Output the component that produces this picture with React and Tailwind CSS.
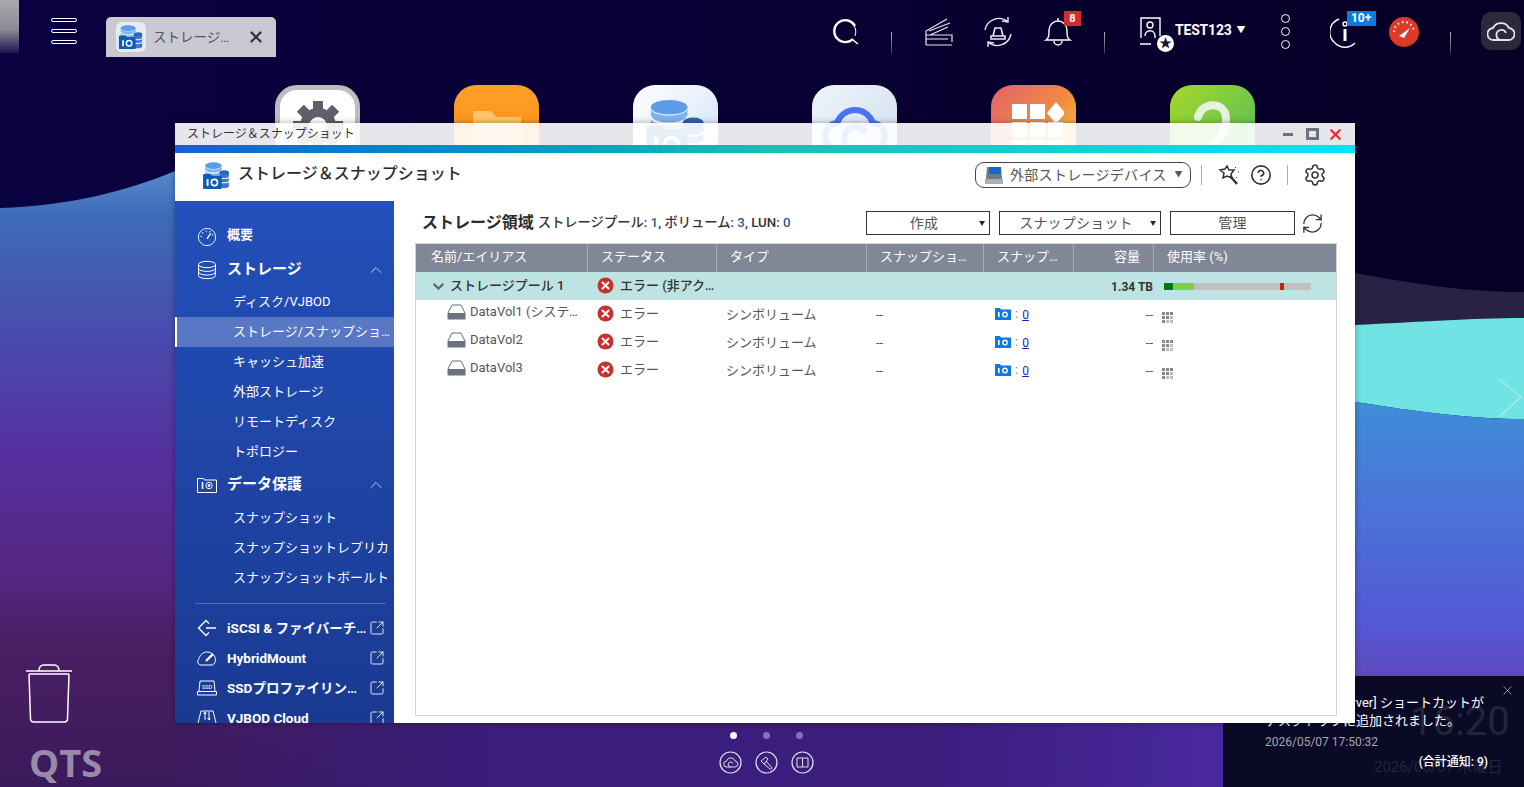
import React from 'react';
import { SquareArrowOutUpRight, ChevronUp, ChevronDown, X, RefreshCw, Settings, CircleHelp } from 'lucide-react';

// Storage app icon, used in the tab and in the window header
function StorageIcon({ size = 28 }) {
  return (
    <svg width={size} height={size} viewBox="0 0 28 28">
      <ellipse cx="11" cy="4.5" rx="8" ry="3.2" fill="#5b9be8" />
      <path d="M3 5v9h16V5a8 3.2 0 0 1-16 0z" fill="#7fb4f0" />
      <path d="M3 8.5a8 3.2 0 0 0 16 0M3 12a8 3.2 0 0 0 16 0" fill="none" stroke="#fff" strokeWidth="1" />
      <path d="M17 11h9v13a4 2 0 0 1-9 0z" fill="#3e78cc" />
      <ellipse cx="21.5" cy="11" rx="4.5" ry="2" fill="#2f63b4" />
      <path d="M17 15a4.5 2 0 0 0 9 0M17 19a4.5 2 0 0 0 9 0" fill="none" stroke="#fff" strokeWidth="1" />
      <rect x="1" y="14" width="18" height="13" rx="1" fill="#0f5db0" />
      <rect x="1" y="12.5" width="8" height="3" rx="1" fill="#0f5db0" />
      <rect x="4.5" y="17.5" width="1.8" height="6.5" fill="#fff" />
      <circle cx="12" cy="20.7" r="3" fill="none" stroke="#fff" strokeWidth="1.6" />
    </svg>
  );
}

function Wallpaper() {
  return (
    <svg className="absolute inset-0" width="1524" height="787" viewBox="0 0 1524 787">
      <defs>
        <linearGradient id="top" x1="0" y1="0" x2="1" y2="0">
          <stop offset="0" stopColor="#0a0140" />
          <stop offset="1" stopColor="#060026" />
        </linearGradient>
        <linearGradient id="wave" x1="0" y1="150" x2="0" y2="787" gradientUnits="userSpaceOnUse">
          <stop offset="0" stopColor="#6496d2" />
          <stop offset="0.1" stopColor="#3f6cb8" />
          <stop offset="0.3" stopColor="#4a4aac" />
          <stop offset="0.48" stopColor="#55309e" />
          <stop offset="0.66" stopColor="#562784" />
          <stop offset="0.78" stopColor="#4b1e62" />
          <stop offset="1" stopColor="#3a1a5c" />
        </linearGradient>
        <linearGradient id="mid" x1="0" y1="0" x2="1" y2="0">
          <stop offset="0" stopColor="#3a1d7c" stopOpacity="0" />
          <stop offset="0.3" stopColor="#3a1d7c" />
          <stop offset="0.7" stopColor="#3a1d7c" />
          <stop offset="1" stopColor="#4a2aa0" />
        </linearGradient>
        <linearGradient id="rightBlue" x1="0" y1="402" x2="0" y2="680" gradientUnits="userSpaceOnUse">
          <stop offset="0" stopColor="#3f8ed8" />
          <stop offset="0.45" stopColor="#4c6fd8" />
          <stop offset="0.8" stopColor="#5558d6" />
          <stop offset="1" stopColor="#6248bc" />
        </linearGradient>
        <linearGradient id="corner" x1="0" y1="0" x2="0" y2="1">
          <stop offset="0" stopColor="#a9a6ad" />
          <stop offset="0.55" stopColor="#8f8c98" />
          <stop offset="1" stopColor="#1c1550" />
        </linearGradient>
      </defs>
      <rect width="1524" height="787" fill="url(#top)" />
      <path d="M0 208C70 206 130 190 175 171C260 140 400 180 600 300L900 787H0z" fill="url(#wave)" />
      <rect x="175" y="700" width="1060" height="87" fill="url(#mid)" />
      <path d="M1355 273C1420 285 1470 292 1524 292V330H1355z" fill="#2a2245" />
      <path d="M1355 325C1420 322 1470 318 1524 318V419C1470 419 1420 412 1355 402z" fill="#70e3e4" />
      <path d="M1355 402C1420 412 1470 419 1524 419V690H1355z" fill="url(#rightBlue)" />
      <path d="M1499 379L1521 397L1499 417" fill="none" stroke="#a8efee" strokeWidth="1.2" />
      <rect x="0" y="0" width="19" height="53" fill="url(#corner)" />
    </svg>
  );
}

function DesktopIcon({ className, children }) {
  return <div className={`w-[85px] h-[85px] rounded-[22px] overflow-hidden flex justify-center pt-[12px] shrink-0 ${className}`}>{children}</div>;
}

function DesktopIcons() {
  return (
    <div className="absolute left-[275px] top-[85px] flex gap-[94px]">
      <DesktopIcon className="bg-white border-[5px] border-[#bdbdbd] !pt-[6px]">
        <svg width="60" height="60" viewBox="0 0 60 60">
          {[0, 45, 90, 135, 180, 225, 270, 315].map((a) => (
            <rect key={a} x="25" y="5" width="10" height="12" fill="#5f6068" transform={`rotate(${a} 30 30)`} />
          ))}
          <circle cx="30" cy="30" r="18" fill="#5f6068" />
          <circle cx="30" cy="30" r="9" fill="#fff" />
        </svg>
      </DesktopIcon>
      <DesktopIcon className="bg-gradient-to-b from-[#ffa028] to-[#f58a10]">
        <svg width="60" height="60" viewBox="0 0 60 60"><path d="M6 14h18l5 6h25v34H6z" fill="#ffc46a" /></svg>
      </DesktopIcon>
      <DesktopIcon className="bg-gradient-to-br from-white to-[#cfe0f6]">
        <StorageIcon size={64} />
      </DesktopIcon>
      <DesktopIcon className="bg-gradient-to-br from-[#eef5fa] to-[#cfdcec]">
        <svg width="68" height="68" viewBox="0 0 68 68" fill="none" stroke="#4a74f0" strokeWidth="6">
          <path d="M18 52a13 13 0 0 1-2-26 19 19 0 0 1 36 0 13 13 0 0 1-2 26z" />
          <path d="M34 52a11 11 0 1 1 10-16" />
        </svg>
      </DesktopIcon>
      <DesktopIcon className="bg-gradient-to-br from-[#e2606a] via-[#f08a40] to-[#f2d814] !pt-[17px]">
        <svg width="60" height="60" viewBox="0 0 60 60" fill="#fff">
          <rect x="8" y="2" width="15" height="15" /><rect x="26" y="2" width="15" height="15" />
          <path d="M52 0l9 11-9 11-9-11z" />
          <rect x="8" y="20" width="15" height="15" /><rect x="26" y="20" width="15" height="15" /><rect x="44" y="20" width="15" height="15" />
          <rect x="8" y="38" width="15" height="15" /><rect x="26" y="38" width="15" height="15" /><rect x="44" y="38" width="15" height="15" />
        </svg>
      </DesktopIcon>
      <DesktopIcon className="bg-gradient-to-br from-[#a6d820] to-[#46b858]">
        <svg width="50" height="70" viewBox="0 0 50 70" fill="none" stroke="#e6f2dc" strokeWidth="8" strokeLinecap="round">
          <path d="M10 20C14 4 38 4 38 22C38 36 28 42 22 58" />
        </svg>
      </DesktopIcon>
    </div>
  );
}

function TopBar() {
  return (
    <header className="absolute left-0 top-0 w-full h-[60px] flex items-center text-white">
      <div className="ml-[51px] w-[26px] flex flex-col gap-[7px] mt-[2px]">
        <span className="h-[4px] rounded-full border border-white" />
        <span className="h-[4px] rounded-full border border-white" />
        <span className="h-[4px] rounded-full border border-white" />
      </div>
      <div className="ml-[29px] mt-[14px] w-[170px] h-[40px] rounded-t-[5px] bg-[#c9c8d3] flex items-center pl-[10px]">
        <div className="w-[30px] h-[30px] rounded-[6px] bg-[#e6eaf3] flex items-center justify-center"><StorageIcon size={26} /></div>
        <span className="ml-[7px] text-[13.5px] text-[#555] w-[78px] truncate">ストレージ＆スナップショット</span>
        <X size={18} strokeWidth={3} className="ml-[16px] text-[#333]" />
      </div>

      <svg className="ml-[555px] mt-[4px]" width="30" height="30" viewBox="0 0 30 30" fill="none" stroke="#fff" strokeWidth="2">
        <path d="M24 9A11 11 0 1 0 22 22" strokeWidth="2.4" />
        <path d="M19 5A11 11 0 0 1 24 19" strokeWidth="1" />
        <path d="M22 23l5 4" strokeWidth="1.6" />
      </svg>
      <span className="ml-[30px] mt-[26px] w-px h-[22px] bg-gradient-to-b from-white/70 to-white/20" />
      <svg className="ml-[31px] mt-[4px]" width="30" height="30" viewBox="0 0 30 30" fill="none" stroke="#e8e8f0" strokeWidth="1.2">
        <path d="M3 28h26M3 28V14L24 2M3 18h26v7M6 14L27 6M3 22h22M7 18l18-8" />
      </svg>
      <svg className="ml-[29px] mt-[4px]" width="32" height="32" viewBox="0 0 32 32" fill="none" stroke="#e8e8f0" strokeWidth="1.4">
        <path d="M26 6A14 14 0 0 0 3 14M6 26A14 14 0 0 0 29 18" />
        <path d="M20 5l6 1 0-5M12 27l-6-1 0 5" />
        <path d="M11 20l2-8h6l2 8zM9 20h14v3H9z" strokeWidth="1.6" />
      </svg>
      <div className="relative ml-[29px] mt-[4px] w-[32px] h-[32px]">
        <svg width="30" height="32" viewBox="0 0 30 32" fill="none" stroke="#fff" strokeWidth="1.4">
          <path d="M3 24c3-2 3-5 3-10a9 9 0 0 1 18 0c0 5 0 8 3 10zM11 25a4 4 0 0 0 8 0M15 2v3" />
        </svg>
        <span className="absolute left-[21px] top-[-5px] w-[17px] h-[15px] bg-[#d92b2b] text-[11px] font-bold leading-[15px] text-center">8</span>
      </div>
      <span className="ml-[29px] mt-[26px] w-px h-[22px] bg-gradient-to-b from-white/70 to-white/20" />
      <div className="relative ml-[34px] mt-[4px] w-[30px] h-[32px]">
        <svg width="30" height="32" viewBox="0 0 30 32" fill="none" stroke="#fff" strokeWidth="1.4">
          <path d="M2 22V2h19v18M1 28h11" />
          <circle cx="11" cy="9" r="3" />
          <path d="M6 20c0-7 10-7 10 0v2" />
        </svg>
        <div className="absolute left-[18px] top-[19px] w-[17px] h-[17px] rounded-full bg-white text-[#15103a] text-[13px] leading-[16px] text-center">★</div>
      </div>
      <span className="ml-[6px] mt-[1px] text-[14px] font-bold tracking-[-0.2px]">TEST123</span>
      <span className="ml-[5px] mt-[2px] text-[9px]">▼</span>
      <div className="ml-[35px] mt-[2px] flex flex-col gap-[4px]">
        <span className="w-[9px] h-[9px] rounded-full border border-white" />
        <span className="w-[9px] h-[9px] rounded-full border border-white" />
        <span className="w-[9px] h-[9px] rounded-full border border-white" />
      </div>
      <div className="relative ml-[40px] mt-[4px] w-[30px] h-[32px]">
        <svg width="30" height="32" viewBox="0 0 30 32" fill="none" stroke="#fff" strokeWidth="1.4">
          <path d="M9 3A14 14 0 0 0 5 27M25 27a14 14 0 0 1-20 0" />
          <circle cx="15" cy="8" r="2" />
          <path d="M15 13v12" strokeWidth="3" />
        </svg>
        <span className="absolute left-[17px] top-[-5px] w-[29px] h-[15px] bg-[#0a7ae6] text-[12px] font-bold leading-[15px] text-center">10+</span>
      </div>
      <svg className="ml-[28px] mt-[4px]" width="32" height="32" viewBox="0 0 32 32" fill="none">
        <circle cx="16" cy="16" r="15" fill="#dd3a2a" />
        <path d="M6 16a10 10 0 0 1 20 0" stroke="#fff" strokeWidth="2" strokeDasharray="1.5 3" />
        <path d="M11 20l11-8-6 10z" fill="#fff" />
      </svg>
      <span className="ml-[30px] mt-[26px] w-px h-[22px] bg-gradient-to-b from-white/70 to-white/20" />
      <div className="ml-[30px] mt-[2px] w-[40px] h-[38px] rounded-[10px] bg-[#2a2a3c] flex items-center justify-center">
        <svg width="28" height="22" viewBox="0 0 28 22" fill="none" stroke="#e4e4ea" strokeWidth="1.8">
          <path d="M7 20a6 6 0 0 1-1-12 9 9 0 0 1 16 0 6 6 0 0 1-1 12z" />
          <path d="M14 20a5 5 0 1 1 5-7" />
        </svg>
      </div>
    </header>
  );
}

const sideIcons = {
  gauge: (
    <svg width="22" height="22" viewBox="0 0 22 22" fill="none" stroke="#fff" strokeWidth="1">
      <circle cx="11" cy="11" r="9.5" />
      <path d="M4.5 11a6.5 6.5 0 0 1 13 0" strokeDasharray="1.2 3" strokeWidth="1.4" />
      <path d="M11 13l4-6" strokeWidth="1.4" />
    </svg>
  ),
  db: (
    <svg width="20" height="20" viewBox="0 0 20 20" fill="none" stroke="#fff" strokeWidth="1">
      <ellipse cx="10" cy="4.5" rx="8.5" ry="3.2" />
      <path d="M1.5 4.5v11c0 4.2 17 4.2 17 0v-11M1.5 8.2c0 4.2 17 4.2 17 0M1.5 11.900c0 4.2 17 4.2 17 0" />
    </svg>
  ),
  snap: (
    <svg width="20" height="16" viewBox="0 0 20 16" fill="none" stroke="#fff" strokeWidth="1">
      <path d="M.5 15.500V1.500h6l1 1.500h12v12.500z" />
      <path d="M5.500 5v7" strokeWidth="1.6" />
      <circle cx="12" cy="8.500" r="3.200" />
      <circle cx="12" cy="8.500" r="1" fill="#fff" />
    </svg>
  ),
  iscsi: (
    <svg width="20" height="18" viewBox="0 0 20 18" fill="none" stroke="#fff" strokeWidth="1.3">
      <path d="M12 4.500L9 1.500L1.500 9l7.500 7.500L12 13.500M9 9h10" />
    </svg>
  ),
  cloud: (
    <svg width="20" height="15" viewBox="0 0 20 15" fill="none" stroke="#fff" strokeWidth="1">
      <path d="M4 14a3.300 3.300 0 0 1-2.500-5.500C3 4 6 1 10 1c3 0 5 1 6.500 3 2.500 2 3 8-1 10z" />
      <path d="M9 10l7-7" strokeWidth="2.4" />
    </svg>
  ),
  ssd: (
    <svg width="20" height="16" viewBox="0 0 20 16" fill="none" stroke="#fff" strokeWidth="1">
      <path d="M2 11L3 1h14l1 10M.5 11.500h19v3.500H.5z" />
      <text x="10" y="9" fontSize="5.500" textAnchor="middle" fill="#fff" stroke="none" fontFamily="Roboto">SSD</text>
    </svg>
  ),
  vjbod: (
    <svg width="20" height="18" viewBox="0 0 20 18" fill="none" stroke="#fff" strokeWidth="1">
      <path d="M1 14L4 2h12l3 12M.5 14.500h19v3H.5zM8 11V3M6.500 5L8 3l1.500 2M12 3v8M10.500 9l1.500 2 1.500-2" />
    </svg>
  ),
};

const storageItems = ['ディスク/VJBOD', 'ストレージ/スナップショット', 'キャッシュ加速', '外部ストレージ', 'リモートディスク', 'トポロジー'];
const protectItems = ['スナップショット', 'スナップショットレプリカ', 'スナップショットボールト'];
const externalItems = [
  { icon: 'iscsi', label: 'iSCSI & ファイバーチャネル' },
  { icon: 'cloud', label: 'HybridMount' },
  { icon: 'ssd', label: 'SSDプロファイリングツール' },
  { icon: 'vjbod', label: 'VJBOD Cloud' },
];

function SideHeading({ icon, label, large, open }) {
  return (
    <div className="h-[33px] flex items-center pl-[22px] pr-[8px] text-white">
      <span className="w-[20px] flex justify-center">{sideIcons[icon]}</span>
      <span className={`ml-[10px] font-bold ${large ? 'text-[15px]' : 'text-[13px] mt-[-3px]'}`}>{label}</span>
      {open && <ChevronUp size={20} strokeWidth={1} className="ml-auto text-[#dde4f6]" />}
    </div>
  );
}

function SideItem({ label, selected }) {
  return (
    <div className={`h-[30px] flex items-center pl-[58px] text-[13px] text-white ${selected ? 'bg-white/25 border-l-2 border-white !pl-[56px] pr-[3px]' : ''}`}>
      <span className="truncate">{label}</span>
    </div>
  );
}

function Sidebar() {
  return (
    <aside className="w-[219px] shrink-0 bg-gradient-to-b from-[#2350ba] to-[#1a3a92] pt-[19px] overflow-hidden">
      <SideHeading icon="gauge" label="概要" />
      <SideHeading icon="db" label="ストレージ" large open />
      <div className="mt-[1px] mb-[1px]">
        {storageItems.map((item, i) => (
          <SideItem key={item} label={item} selected={i === 1} />
        ))}
      </div>
      <SideHeading icon="snap" label="データ保護" large open />
      <div className="mt-[2px]">
        {protectItems.map((item) => (
          <SideItem key={item} label={item} />
        ))}
      </div>
      <div className="ml-[20px] mr-[8px] mt-[10px] mb-[9px] h-px bg-white/25" />
      {externalItems.map((item) => (
        <div key={item.label} className="h-[30px] flex items-center pl-[22px] pr-[9px] text-white">
          <span className="w-[20px] flex justify-center shrink-0">{sideIcons[item.icon]}</span>
          <span className="ml-[10px] text-[13.5px] font-bold truncate flex-1">{item.label}</span>
          <SquareArrowOutUpRight size={16} strokeWidth={1.3} className="ml-[2px] shrink-0" />
        </div>
      ))}
    </aside>
  );
}

const gridCols = 'grid grid-cols-[171px_129px_150px_117px_90px_80px_1fr]';
const columns = [
  { label: '名前/エイリアス' },
  { label: 'ステータス' },
  { label: 'タイプ' },
  { label: 'スナップショット数' },
  { label: 'スナップショット' },
  { label: '容量', right: true },
  { label: '使用率 (%)' },
];
const volumes = [
  { name: 'DataVol1 (システムボリューム)' },
  { name: 'DataVol2' },
  { name: 'DataVol3' },
];

function ErrorIcon() {
  return (
    <svg width="17" height="17" viewBox="0 0 17 17" className="shrink-0 mt-[-2px]">
      <circle cx="8.500" cy="8.500" r="8" fill="#c9302c" />
      <path d="M5.500 5.500l6 6M11.500 5.500l-6 6" stroke="#fff" strokeWidth="2" strokeLinecap="round" />
    </svg>
  );
}

function DriveIcon() {
  return (
    <svg width="19" height="16" viewBox="0 0 19 16" className="shrink-0">
      <path d="M1 9L5 1h9l4 8" fill="none" stroke="#666c7c" strokeWidth="1" />
      <path d="M.5 9h18v6.500H.5z" fill="#6b7182" />
    </svg>
  );
}

function SnapBadge() {
  return (
    <svg width="16" height="13" viewBox="0 0 16 13" className="mt-[-2px]">
      <path d="M0 13V1h5l1 1.500h10V13z" fill="#0a7ae6" />
      <rect x="3" y="5" width="1.600" height="5" fill="#fff" />
      <circle cx="10" cy="7.500" r="2.200" fill="none" stroke="#fff" strokeWidth="1.400" />
    </svg>
  );
}

function PixelIcon() {
  return (
    <svg width="12" height="12" viewBox="0 0 12 12" fill="#888">
      {[0, 4, 8].map((x) => [0, 4, 8].map((y) => <rect key={`${x}-${y}`} x={x} y={y} width="3" height="3" opacity={x + y > 8 ? 0.55 : 1} />))}
    </svg>
  );
}

function Dropdown({ label, width, caret }) {
  return (
    <div className={`h-[24px] border border-[#333] flex items-center relative text-[14px] text-[#555] justify-center ${caret ? 'pr-[8px]' : ''} ${width}`}>
      <span className="tracking-[0.2px]">{label}</span>
      {caret && <span className="absolute right-[4px] top-[6px] text-[6px] text-[#222]">▼</span>}
    </div>
  );
}

function Content() {
  return (
    <main className="flex-1 min-w-0 pr-[18px] pt-[5px] pb-[7px] pl-[21px] flex flex-col bg-white">
      <div className="h-[34px] shrink-0 flex items-center">
        <h2 className="ml-[7px] text-[16px] font-bold text-[#2b2b2b]">ストレージ領域</h2>
        <p className="ml-[4px] text-[13.3px] font-medium text-[#333]">
          ストレージプール: <span className="text-[#2a5a96]">1</span>, ボリューム: <span className="text-[#2a5a96]">3</span>, LUN: <span className="text-[#2a5a96]">0</span>
        </p>
        <div className="ml-auto flex items-center gap-[9px]">
          <Dropdown label="作成" width="w-[124px]" caret />
          <Dropdown label="スナップショット" width="w-[162px]" caret />
          <Dropdown label="管理" width="w-[125px]" />
          <RefreshCw size={23} strokeWidth={1.4} className="-ml-[3px] mr-[13px] text-[#333]" />
        </div>
      </div>
      <div className="flex-1 border border-[#d4d4d4] mt-[3px] w-[922px]">
        <div className={`${gridCols} h-[28px] bg-[#808898] text-[13px] text-white`}>
          {columns.map((col, i) => (
            <div key={col.label} className={`flex items-center min-w-0 ${i ? 'border-l border-[#a5abb8] pl-[13px]' : 'pl-[15px]'} pr-[13px] pb-[3px] ${col.right ? 'justify-end' : ''}`}>
              <span className="truncate">{col.label}</span>
            </div>
          ))}
        </div>
        <div className={`${gridCols} h-[28px] bg-[#bee3e3] text-[13px] text-[#333] items-center`}>
          <div className="pl-[14px] flex items-center gap-[3px] font-medium">
            <ChevronDown size={17} strokeWidth={3} className="text-[#666]" />
            <span className="truncate">ストレージプール 1</span>
          </div>
          <div className="pl-[10px] flex items-center gap-[6px] min-w-0">
            <ErrorIcon />
            <span className="truncate font-medium">エラー (非アクティブ)</span>
          </div>
          <div />
          <div />
          <div />
          <div className="text-right font-bold text-[12px] mt-[1px] text-[#333]">1.34 TB</div>
          <div className="pl-[11px] pr-[25px]">
            <div className="flex h-[7px] bg-[#c0c0c0] relative mt-[1px]">
              <span className="w-[9px] bg-[#007a0e]" />
              <span className="w-[21px] bg-[#7fd040]" />
              <span className="absolute left-[116px] w-[4px] h-full bg-[#e81010]" />
            </div>
          </div>
        </div>
        {volumes.map((vol) => (
          <div key={vol.name} className={`${gridCols} h-[28px] text-[13px] text-[#555] items-center`}>
            <div className="pl-[31px] flex items-center gap-[4px] min-w-0 pr-[6px] mt-[-4px]">
              <DriveIcon />
              <span className="truncate">{vol.name}</span>
            </div>
            <div className="pl-[10px] flex items-center gap-[6px]">
              <ErrorIcon />
              <span>エラー</span>
            </div>
            <div className="pl-[10px] mt-[2px]">シンボリューム</div>
            <div className="pl-[10px] mt-[2px]">--</div>
            <div className="pl-[12px] flex items-center gap-[4px]">
              <SnapBadge />
              <span className="text-[#888]">:</span>
              <span className="text-[#1a1ac8] underline text-[12px] mt-[2px]">0</span>
            </div>
            <div className="text-right mt-[2px]">--</div>
            <div className="pl-[9px] mt-[7px]"><PixelIcon /></div>
          </div>
        ))}
      </div>
    </main>
  );
}

function AppWindow() {
  return (
    <section className="absolute left-[175px] top-[123px] w-[1180px] h-[600px] flex flex-col shadow-[0_0_6px_rgba(0,0,0,0.35)]">
      <div className="h-[22px] shrink-0 bg-white/90 flex items-center pl-[12px] text-[12px] text-[#333]">
        <span>ストレージ＆スナップショット</span>
        <div className="ml-auto flex items-center pr-[11px]">
          <span className="w-[10px] h-[3px] bg-[#6a7282]" />
          <span className="ml-[13px] w-[13px] h-[12px] border-[3px] border-[#6a7282]" />
          <X size={17} strokeWidth={3} className="ml-[8px] text-[#dd2f2f]" />
        </div>
      </div>
      <div className="h-[8px] shrink-0 bg-gradient-to-r from-[#1a5ed0] via-[#16c0b0] to-[#00e6f8]" />
      <div className="h-[48px] shrink-0 bg-white flex items-center pl-[27px] pb-[4px]">
        <StorageIcon size={29} />
        <h1 className="ml-[7px] mt-[-2px] text-[16px] font-medium text-[#2b2b2b]">ストレージ＆スナップショット</h1>
        <div className="ml-auto flex items-center">
          <div className="w-[216px] h-[26px] rounded-[9px] border border-[#444] flex items-center pl-[8px] text-[14px] text-[#555]">
            <svg width="20" height="19" viewBox="0 0 20 19">
              <path d="M2 13L3 1h14l1 12z" fill="#6e7a84" />
              <rect x="5" y="1" width="12" height="7" fill="#1b66c8" />
              <path d="M1 13h18v5H1z" fill="#a8aeb4" />
            </svg>
            <span className="ml-[6px] tracking-[0.3px]">外部ストレージデバイス</span>
            <span className="ml-[8px] text-[8px] text-[#555]">▼</span>
          </div>
          <span className="ml-[10px] w-px h-[20px] bg-[#aaa]" />
          <svg className="ml-[16px]" width="22" height="22" viewBox="0 0 22 22" fill="none" stroke="#333" strokeWidth="1.500">
            <path d="M9 2l2 4 5 0-3 4 1 4-5-2-4 2 1-5-4-3 5-1z" />
            <path d="M12 12l7 8" strokeWidth="2.400" />
            <path d="M17 3l1 1M20 8h1M18 13l1 1" strokeWidth="1" />
          </svg>
          <CircleHelp size={22} strokeWidth={1.800} className="ml-[10px] text-[#333]" />
          <span className="ml-[15px] w-px h-[20px] bg-[#aaa]" />
          <Settings size={24} strokeWidth={1.500} className="ml-[15px] mr-[28px] text-[#333]" />
        </div>
      </div>
      <div className="flex-1 min-h-0 flex">
        <Sidebar />
        <Content />
      </div>
    </section>
  );
}

function Notification() {
  return (
    <div className="absolute right-0 bottom-0 w-[301px] h-[111px] bg-[#0a0a26] text-white">
      <div className="absolute left-[187px] top-[26px] text-[40px] leading-[40px] text-[#24243a]">16:20</div>
      <div className="absolute left-[151px] top-[80px] text-[15px] text-[#24243a]">2026/05/07 木曜日</div>
      <X size={15} strokeWidth={1} className="absolute right-[9px] top-[7px] text-[#cfcfd6]" />
      <div className="relative pl-[42px] pt-[18px] text-[13px] leading-[18px]">
        <p className="whitespace-nowrap">[Multimedia Server] ショートカットが</p>
        <p>デスクトップに追加されました。</p>
        <p className="mt-[3px] text-[12px] text-[#a5a5b0]">2026/05/07 17:50:32</p>
        <p className="mt-[2px] mr-[36px] text-right text-[12px] font-medium">(合計通知: 9)</p>
      </div>
    </div>
  );
}

function DockControls() {
  return (
    <div className="absolute left-[716px] top-[732px] flex flex-col items-center gap-[12px] w-[100px]">
      <div className="flex gap-[26px]">
        <span className="w-[7px] h-[7px] rounded-full bg-white" />
        <span className="w-[7px] h-[7px] rounded-full bg-[#8a70b8]" />
        <span className="w-[7px] h-[7px] rounded-full bg-[#8a70b8]" />
      </div>
      <div className="flex gap-[13px] text-[#e4e0ee]">
        <svg width="23" height="23" viewBox="0 0 23 23" fill="none" stroke="currentColor" strokeWidth="1">
          <circle cx="11.500" cy="11.500" r="10.500" strokeWidth="1.200" />
          <path d="M8 16a3 3 0 0 1-.5-6 4.500 4.500 0 0 1 8.600 0 3 3 0 0 1-.5 6z" />
          <path d="M11.500 16a2.500 2.500 0 1 1 2.500-3.500" />
        </svg>
        <svg width="23" height="23" viewBox="0 0 23 23" fill="none" stroke="currentColor" strokeWidth="1">
          <circle cx="11.500" cy="11.500" r="10.500" strokeWidth="1.200" />
          <path d="M6 10l5-4 2 2-4 5zM11 10l6 7-1.500 1.500-7-6" />
        </svg>
        <svg width="23" height="23" viewBox="0 0 23 23" fill="none" stroke="currentColor" strokeWidth="1">
          <circle cx="11.500" cy="11.500" r="10.500" strokeWidth="1.200" />
          <path d="M6 7h5.500v9H6zM11.500 7H17v9h-5.500z" />
        </svg>
      </div>
    </div>
  );
}

export default function App() {
  return (
    <div className="relative w-[1524px] h-[787px] overflow-hidden bg-[#0a0140] font-[Roboto,'Noto_Sans_CJK_JP',sans-serif]">
      <Wallpaper />
      <DesktopIcons />
      <svg className="absolute left-[25px] top-[663px]" width="48" height="60" viewBox="0 0 48 60" fill="none" stroke="#fff" strokeWidth="1.500">
        <path d="M1 8h46M4 11l1.500 45a3 3 0 0 0 3 3h31a3 3 0 0 0 3-3L44 11M4 11h40M14 8c0-3 1-6 5-6h10c4 0 5 3 5 6" />
      </svg>
      <div className="absolute left-[29px] top-[738px] text-[38px] leading-[49px] font-bold text-[#9a8aaa] font-['Open_Sans',sans-serif]">QTS</div>
      <DockControls />
      <Notification />
      <AppWindow />
      <TopBar />
    </div>
  );
}
